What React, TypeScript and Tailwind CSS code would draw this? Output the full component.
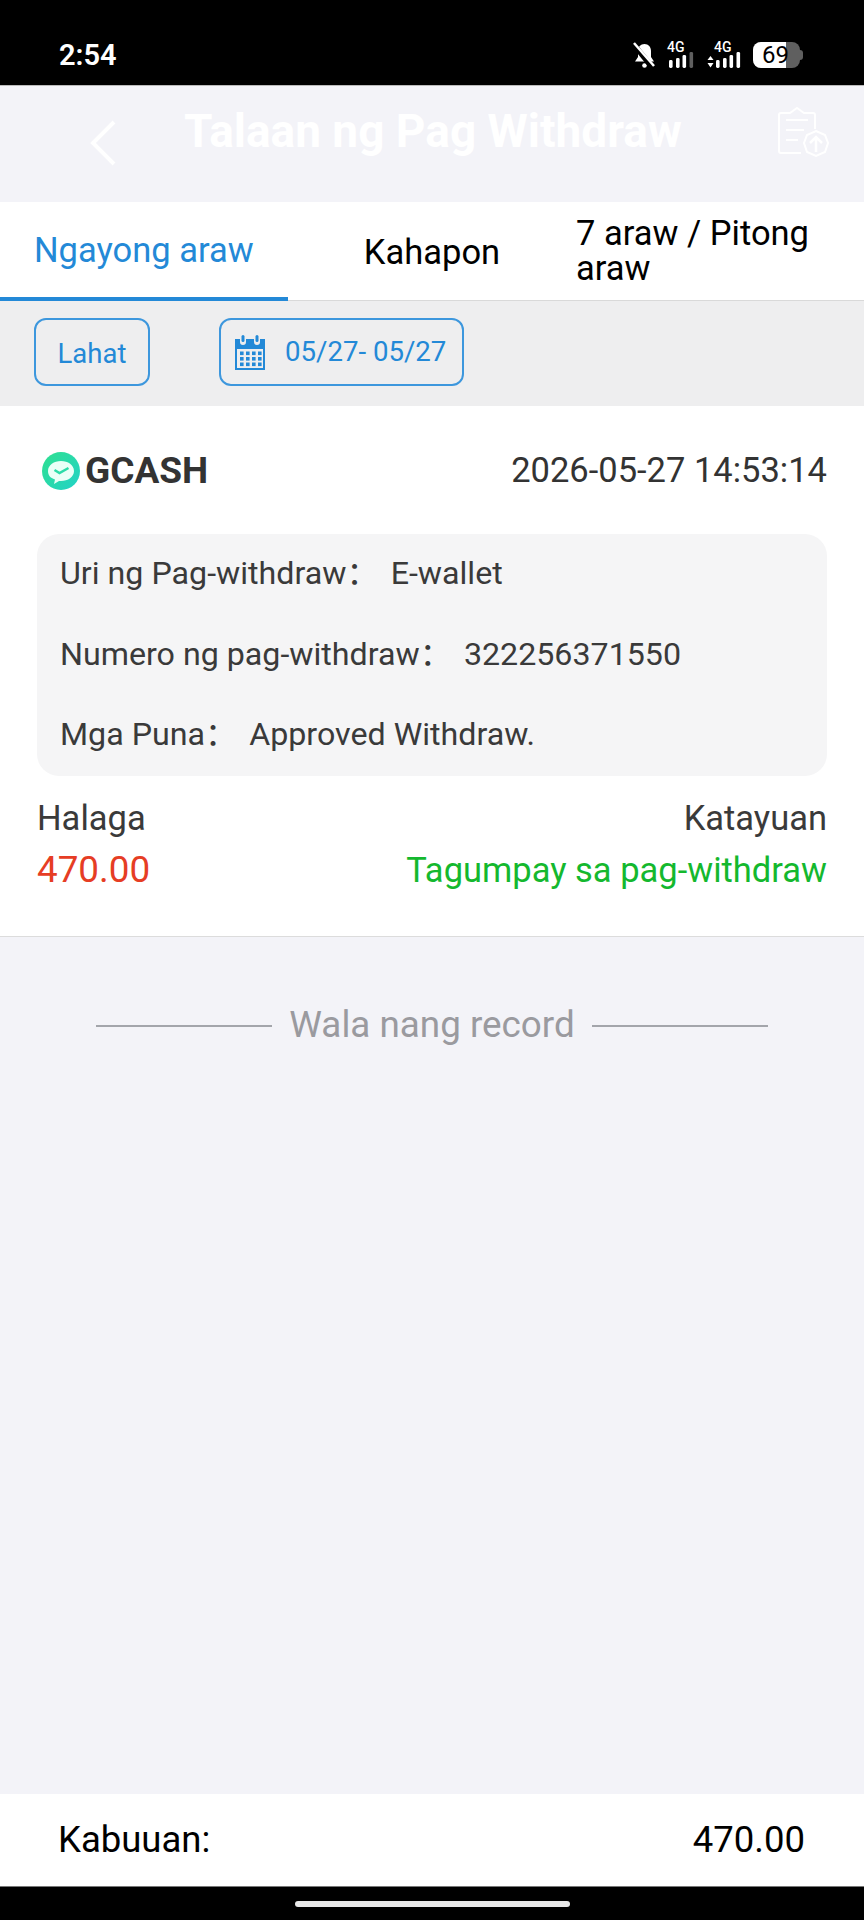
import type { FC } from 'react';

const SignalBars: FC<{ lastDim?: boolean; arrows?: boolean }> = ({ lastDim, arrows }) => (
  <div className="flex items-end">
    {arrows && (
      <svg width="7" height="13" viewBox="0 0 7 13">
        <path d="M0.500 5 L3.500 1 L6.500 5 Z M0.500 8 L3.500 12.500 L6.500 8 Z" fill="#fff" />
      </svg>
    )}
    <div className="flex flex-col w-[27px]">
      <span className="text-[14px] leading-[11px] font-medium text-white">4G</span>
      <svg width="27" height="16" viewBox="0 0 27 16" className="-mt-px">
        <rect x="2" y="8" width="3.600" height="8" rx="1.400" fill="#fff" />
        <rect x="9" y="6" width="3.600" height="10" rx="1.400" fill="#fff" />
        <rect x="15.500" y="3" width="3.600" height="13" rx="1.400" fill="#fff" />
        <rect x="22.500" y="0" width="3.600" height="16" rx="1.400" fill={lastDim ? '#5f5f5f' : '#fff'} />
      </svg>
    </div>
  </div>
);

const StatusBar: FC = () => (
  <div className="h-[86px] bg-black flex items-center justify-between pt-[24px] pl-[59px] pr-[61px] border-b border-[#bbb]">
    <span className="text-[29px] leading-[34px] font-semibold text-white">2:54</span>
    <div className="flex items-center">
      <svg width="23" height="26" viewBox="0 0 23 26">
        <path d="M11.500 2C7.500 2 5 5 5 9v6l-3 4.500h19L18 15V9c0-4-2.500-7-6.500-7Z" fill="#fff" />
        <circle cx="11.500" cy="23.500" r="2.300" fill="#fff" />
        <path d="M1 3 L19 25" stroke="#000" strokeWidth="5.500" />
        <path d="M1 1 L21 24" stroke="#fff" strokeWidth="2.500" />
      </svg>
      <div className="ml-[11px]"><SignalBars lastDim /></div>
      <div className="ml-[13px]"><SignalBars arrows /></div>
      <div className="ml-[12px] flex items-center">
        <div className="w-[47px] h-[26px] rounded-[8px] bg-[#5f5f5f] overflow-hidden flex">
          <div className="w-[33px] bg-white flex items-center justify-end">
            <span className="text-[24px] leading-none text-black -mr-[3px]">69</span>
          </div>
        </div>
        <div className="w-[3px] h-[10px] rounded-r-sm bg-[#5f5f5f]" />
      </div>
    </div>
  </div>
);

const Header: FC = () => (
  <div className="h-[116px] bg-[#f3f3f8] flex items-start pl-[89px] pr-[35px]">
    <svg width="28" height="46" viewBox="0 0 28 46" className="mt-[34px]">
      <path d="M25 2 L4 23 L25 44" fill="none" stroke="#fff" strokeWidth="4" />
    </svg>
    <span className="ml-[67px] mt-[20px] text-[46px] leading-[50px] font-bold text-white whitespace-nowrap">
      Talaan ng Pag Withdraw
    </span>
    <svg width="52" height="52" viewBox="0 0 52 52" className="ml-auto mt-[20px]" fill="none" stroke="#fff" strokeWidth="2">
      <path d="M24 47H4a2 2 0 0 1-2-2V9a2 2 0 0 1 2-2h9l7-5 7 5h9a2 2 0 0 1 2 2v14" />
      <path d="M9 14h22M9 24h18M9 34h12" />
      <path d="M39 25l9 4 3 8-3 9-9 4-9-4-3-9 3-8Z" />
      <path d="M39 46V31M33 37l6-6 6 6" strokeWidth="2.500" />
    </svg>
  </div>
);

const Tabs: FC = () => (
  <div className="h-[99px] bg-white flex border-b border-[#d9d9d9]">
    <div className="w-[288px] h-[99px] border-b-4 border-[#2389d7] pl-[34px] flex items-center">
      <span className="text-[34.500px] leading-[40px] text-[#2389d7] whitespace-nowrap">Ngayong araw</span>
    </div>
    <div className="w-[288px] flex items-center justify-center pt-[1px]">
      <span className="text-[34.500px] leading-[40px] text-black">Kahapon</span>
    </div>
    <div className="flex-1 flex items-center">
      <span className="text-[34.500px] leading-[35px] text-black">7 araw / Pitong araw</span>
    </div>
  </div>
);

const CalendarIcon: FC = () => (
  <svg width="32" height="36" viewBox="0 0 32 36" fill="#2389d7">
    <path d="M1 5h5v3a3 3 0 0 0 6 0V5h8v3a3 3 0 0 0 6 0V5h5v31H1Zm2 10v19h26V15Z" />
    <rect x="7.500" y="1" width="3" height="7" rx="1.500" />
    <rect x="21.500" y="1" width="3" height="7" rx="1.500" />
    {[6, 12, 18, 24].map((x) =>
      [17.500, 23, 28.500].map((y) => <rect key={`${x}-${y}`} x={x} y={y} width="3.600" height="3.600" />),
    )}
  </svg>
);

const FilterBar: FC = () => (
  <div className="h-[105px] bg-[#eeeeef] flex items-start pt-[17px] pl-[34px]">
    <div className="w-[116px] h-[68px] rounded-[12px] border-2 border-[#3d97dd] flex items-center justify-center text-[27.500px] text-[#2389d7] pt-[3px]">
      Lahat
    </div>
    <div className="ml-[69px] w-[245px] h-[68px] rounded-[12px] border-2 border-[#3d97dd] flex items-center pl-[13px] text-[27.600px] text-[#2389d7]">
      <CalendarIcon />
      <span className="ml-[19px] whitespace-nowrap">05/27- 05/27</span>
    </div>
  </div>
);

const GcashLogo: FC = () => (
  <svg width="38" height="38" viewBox="0 0 38 38">
    <defs>
      <linearGradient id="gcash" x1="0" y1="0" x2="1" y2="1">
        <stop offset="0" stopColor="#2fe08f" />
        <stop offset="1" stopColor="#22d2c8" />
      </linearGradient>
    </defs>
    <circle cx="19" cy="19" r="19" fill="url(#gcash)" />
    <path d="M6 19c0-6 6-10 13-10s13 4 13 10-6 10-13 10h-2l-5 3 1-4.500C8 26 6 23 6 19Z" fill="#eafff7" />
    <path d="M12.500 18l5 3 9-5" fill="none" stroke="#2bdca8" strokeWidth="2.500" />
  </svg>
);

const rows = [
  { label: 'Uri ng Pag-withdraw', value: 'E-wallet' },
  { label: 'Numero ng pag-withdraw', value: '322256371550' },
  { label: 'Mga Puna', value: 'Approved Withdraw.' },
];

const RecordCard: FC = () => (
  <div className="h-[531px] bg-white border-b border-[#dcdcdc] px-[37px]">
    <div className="h-[128px] flex items-center justify-between pl-[5px] pt-px">
      <div className="flex items-center">
        <GcashLogo />
        <span className="ml-[5px] text-[37px] font-bold text-[#333]">GCASH</span>
      </div>
      <span className="text-[34.500px] text-[#333]">2026-05-27 14:53:14</span>
    </div>
    <div className="h-[242px] rounded-[22px] bg-[#f5f5f6] px-[23px] pt-[19px] flex flex-col gap-[40.500px]">
      {rows.map((row) => (
        <div key={row.label} className="h-[40px] leading-[40px] text-[32.200px] text-[#3a3a3a] whitespace-nowrap">
          {row.label}
          <span className="font-['Noto_Sans_CJK_SC',sans-serif] leading-none mr-[12px]">：</span>
          {row.value}
        </div>
      ))}
    </div>
    <div className="flex justify-between mt-[22px] text-[34.500px] leading-[40px] text-[#3a3a3a]">
      <span>Halaga</span>
      <span>Katayuan</span>
    </div>
    <div className="flex justify-between mt-[12px] leading-[40px]">
      <span className="text-[36.800px] text-[#e63d24]">470.00</span>
      <span className="text-[34.500px] text-[#14b82e]">Tagumpay sa pag-withdraw</span>
    </div>
  </div>
);

export default function App() {
  return (
    <div className="w-[864px] h-[1920px] flex flex-col bg-[#f3f3f8] font-['Roboto',sans-serif] overflow-hidden">
      <StatusBar />
      <Header />
      <Tabs />
      <FilterBar />
      <RecordCard />
      <div className="flex-1">
        <div className="flex items-center justify-center mt-[68px]">
          <div className="w-[176px] h-[2px] bg-[#a3a5ab]" />
          <span className="mx-[17px] text-[36.800px] leading-[44px] text-[#9a9a9f] -mt-[2px]">Wala nang record</span>
          <div className="w-[176px] h-[2px] bg-[#a3a5ab]" />
        </div>
      </div>
      <div className="h-[92px] bg-white flex items-center justify-between pl-[58px] pr-[59px] text-[36.500px] text-black">
        <span>Kabuuan:</span>
        <span>470.00</span>
      </div>
      <div className="h-[34px] bg-black border-t border-[#777] flex items-start justify-center pt-[14px]">
        <div className="w-[275px] h-[6px] rounded-full bg-[#e8e8e8]" />
      </div>
    </div>
  );
}
